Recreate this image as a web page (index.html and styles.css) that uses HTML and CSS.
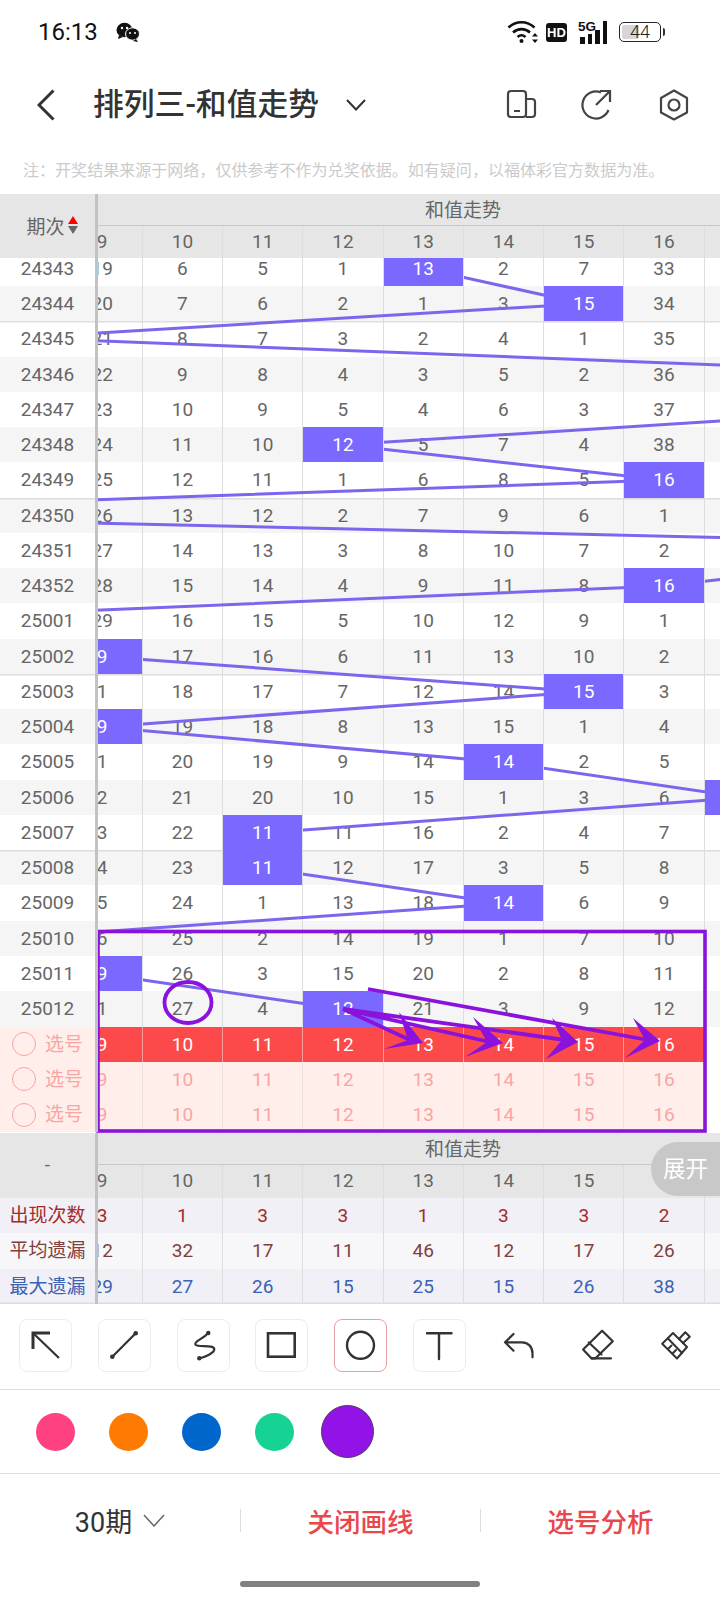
FILE: index.html
```html
<!DOCTYPE html>
<html lang="zh">
<head>
<meta charset="utf-8">
<title>排列三-和值走势</title>
<link rel="stylesheet" href="styles.css">
</head>
<body>
<div class="screen">
  <div class="status">
    <span class="time">16:13</span>
    <svg class="wechat" width="24" height="20" viewBox="0 0 24 20"><ellipse cx="8.5" cy="8" rx="8" ry="7.2" fill="#111"/><path d="M3 13l-1 4 5-2z" fill="#111"/><ellipse cx="16.5" cy="12" rx="7" ry="6.2" fill="#111" stroke="#fff" stroke-width="1"/><path d="M20 17l2 3-5-1z" fill="#111"/><circle cx="6" cy="6" r="1.2" fill="#fff"/><circle cx="11" cy="6" r="1.2" fill="#fff"/><circle cx="14" cy="11" r="1" fill="#fff"/><circle cx="19" cy="11" r="1" fill="#fff"/></svg>
    <span class="status-right">
      <svg width="32" height="24" viewBox="0 0 32 24" fill="none" stroke="#111" stroke-width="2.6"><path d="M1.5 7.5C9 .5 20 .5 27.5 7.5"/><path d="M6 12.5c5-4.5 12-4.5 17 0"/><path d="M10.5 17c2.500-2.200 5.500-2.200 8 0"/><circle cx="14.500" cy="21" r="2" fill="#111" stroke="none"/><path d="M28 13l-3 3.500h6zM28 23l-3-3.500h6z" fill="#111" stroke="none"/></svg>
      <span class="hd">HD</span>
      <span class="signal"><span class="five-g">5G</span><span class="bars"><i class="b1"></i><i class="b2"></i><i class="b3"></i><i class="b4"></i></span></span>
      <span class="battery"><span class="battery-fill"></span><span class="battery-num">44</span></span>
    </span>
  </div>

  <div class="header">
    <svg class="back" width="18" height="32" viewBox="0 0 18 32" fill="none" stroke="#333" stroke-width="3"><path d="M16.500 1.500L2 16l14.500 14.500"/></svg>
    <h1 class="title">排列三-和值走势</h1>
    <svg class="caret" width="20" height="12" viewBox="0 0 20 12" fill="none" stroke="#333" stroke-width="2"><path d="M1 1l9 9.500L19 1"/></svg>
    <span class="header-icons">
      <svg width="32" height="32" viewBox="0 0 32 32" fill="none" stroke="#444" stroke-width="2.200"><rect x="2" y="2" width="18" height="26" rx="3"/><path d="M20 10h6a3 3 0 0 1 3 3v12a3 3 0 0 1-3 3h-6M8 22h6"/></svg>
      <svg width="32" height="32" viewBox="0 0 32 32" fill="none" stroke="#444" stroke-width="2.200"><path d="M21 3.500A13.500 13.500 0 1 0 28.500 21"/><path d="M16 16L30 2M20 2h10v11"/></svg>
      <svg class="hex" width="32" height="32" viewBox="0 0 32 32" fill="none" stroke="#444" stroke-width="2.200" stroke-linejoin="round"><path d="M16 1.500l13 7.500v14.500l-13 7-13-7V9z"/><circle cx="16" cy="16" r="5.500"/></svg>
    </span>
  </div>

  <p class="note">注：开奖结果来源于网络，仅供参考不作为兑奖依据。如有疑问，以福体彩官方数据为准。</p>

  <div class="chart">
    <div class="head">
      <div class="head-label sortable"><span>期次</span><span class="sort"><i class="sort-up"></i><i class="sort-down"></i></span></div>
      <div class="head-main">
        <div class="head-title">和值走势</div>
        <div class="track head-nums"><span>9</span><span>10</span><span>11</span><span>12</span><span>13</span><span>14</span><span>15</span><span>16</span><span>17</span></div>
      </div>
    </div>

    <div class="body">
      <div class="row first"><b class="period">24343</b><div class="track"><span>19</span><span>6</span><span>5</span><span>1</span><span class="hit">13</span><span>2</span><span>7</span><span>33</span><span></span></div></div>
      <div class="row alt"><b class="period">24344</b><div class="track"><span>20</span><span>7</span><span>6</span><span>2</span><span>1</span><span>3</span><span class="hit">15</span><span>34</span><span></span></div></div>
      <div class="row brk"><b class="period">24345</b><div class="track"><span>21</span><span>8</span><span>7</span><span>3</span><span>2</span><span>4</span><span>1</span><span>35</span><span></span></div></div>
      <div class="row alt"><b class="period">24346</b><div class="track"><span>22</span><span>9</span><span>8</span><span>4</span><span>3</span><span>5</span><span>2</span><span>36</span><span></span></div></div>
      <div class="row"><b class="period">24347</b><div class="track"><span>23</span><span>10</span><span>9</span><span>5</span><span>4</span><span>6</span><span>3</span><span>37</span><span></span></div></div>
      <div class="row alt"><b class="period">24348</b><div class="track"><span>24</span><span>11</span><span>10</span><span class="hit">12</span><span>5</span><span>7</span><span>4</span><span>38</span><span></span></div></div>
      <div class="row"><b class="period">24349</b><div class="track"><span>25</span><span>12</span><span>11</span><span>1</span><span>6</span><span>8</span><span>5</span><span class="hit">16</span><span></span></div></div>
      <div class="row alt brk"><b class="period">24350</b><div class="track"><span>26</span><span>13</span><span>12</span><span>2</span><span>7</span><span>9</span><span>6</span><span>1</span><span></span></div></div>
      <div class="row"><b class="period">24351</b><div class="track"><span>27</span><span>14</span><span>13</span><span>3</span><span>8</span><span>10</span><span>7</span><span>2</span><span></span></div></div>
      <div class="row alt"><b class="period">24352</b><div class="track"><span>28</span><span>15</span><span>14</span><span>4</span><span>9</span><span>11</span><span>8</span><span class="hit">16</span><span></span></div></div>
      <div class="row"><b class="period">25001</b><div class="track"><span>29</span><span>16</span><span>15</span><span>5</span><span>10</span><span>12</span><span>9</span><span>1</span><span></span></div></div>
      <div class="row alt"><b class="period">25002</b><div class="track"><span class="hit">9</span><span>17</span><span>16</span><span>6</span><span>11</span><span>13</span><span>10</span><span>2</span><span></span></div></div>
      <div class="row brk"><b class="period">25003</b><div class="track"><span>1</span><span>18</span><span>17</span><span>7</span><span>12</span><span>14</span><span class="hit">15</span><span>3</span><span></span></div></div>
      <div class="row alt"><b class="period">25004</b><div class="track"><span class="hit">9</span><span>19</span><span>18</span><span>8</span><span>13</span><span>15</span><span>1</span><span>4</span><span></span></div></div>
      <div class="row"><b class="period">25005</b><div class="track"><span>1</span><span>20</span><span>19</span><span>9</span><span>14</span><span class="hit">14</span><span>2</span><span>5</span><span></span></div></div>
      <div class="row alt"><b class="period">25006</b><div class="track"><span>2</span><span>21</span><span>20</span><span>10</span><span>15</span><span>1</span><span>3</span><span>6</span><span class="hit">17</span></div></div>
      <div class="row"><b class="period">25007</b><div class="track"><span>3</span><span>22</span><span class="hit">11</span><span>11</span><span>16</span><span>2</span><span>4</span><span>7</span><span></span></div></div>
      <div class="row alt brk"><b class="period">25008</b><div class="track"><span>4</span><span>23</span><span class="hit">11</span><span>12</span><span>17</span><span>3</span><span>5</span><span>8</span><span></span></div></div>
      <div class="row"><b class="period">25009</b><div class="track"><span>5</span><span>24</span><span>1</span><span>13</span><span>18</span><span class="hit">14</span><span>6</span><span>9</span><span></span></div></div>
      <div class="row alt"><b class="period">25010</b><div class="track"><span>6</span><span>25</span><span>2</span><span>14</span><span>19</span><span>1</span><span>7</span><span>10</span><span></span></div></div>
      <div class="row"><b class="period">25011</b><div class="track"><span class="hit">9</span><span>26</span><span>3</span><span>15</span><span>20</span><span>2</span><span>8</span><span>11</span><span></span></div></div>
      <div class="row alt"><b class="period">25012</b><div class="track"><span>1</span><span>27</span><span>4</span><span class="hit">12</span><span>21</span><span>3</span><span>9</span><span>12</span><span></span></div></div>

      <div class="row pick on"><div class="period pick-label"><i class="ring"></i>选号</div><div class="track"><span>9</span><span>10</span><span>11</span><span>12</span><span>13</span><span>14</span><span>15</span><span>16</span><span></span></div></div>
      <div class="row pick"><div class="period pick-label"><i class="ring"></i>选号</div><div class="track"><span>9</span><span>10</span><span>11</span><span>12</span><span>13</span><span>14</span><span>15</span><span>16</span><span></span></div></div>
      <div class="row pick"><div class="period pick-label"><i class="ring"></i>选号</div><div class="track"><span>9</span><span>10</span><span>11</span><span>12</span><span>13</span><span>14</span><span>15</span><span>16</span><span></span></div></div>

      <svg class="trend" width="720" height="875" viewBox="0 258 720 875" fill="none" stroke="#7b66ee" stroke-width="3">
        <path d="M423 268.400L583 303.700L90 333.500"/>
        <path d="M90 340.500L720 365"/>
        <path d="M720 421L343 444.800L664 480.100L90 500"/>
        <path d="M90 523L720 537.500"/>
        <path d="M720 579.600L664 585.900L90 610.500"/>
        <path d="M102 656.500L583 691.800L102 727L503 762.300L744 797.600L263 832.900"/>
        <path d="M263 868.200L503 903.400L90 932.500"/>
        <path d="M102 974L343 1009.300"/>
      </svg>
      <svg class="marks" width="720" height="875" viewBox="0 258 720 875" fill="none" stroke="#8a12dc" stroke-width="3.800">
        <rect x="98" y="931.500" width="607" height="199.500" stroke-width="3.600"/>
        <ellipse cx="188" cy="1002.500" rx="23.500" ry="20.500"/>
        <path d="M368 989L648 1040M343 1009L565 1040M343 1009L490 1042M343 1009L410 1040"/>
        <path fill="#8a12dc" stroke="none" d="M660 1041L633 1018L645 1040L625 1058z"/>
        <path fill="#8a12dc" stroke="none" d="M578 1042L552 1018L562 1040L546 1059z"/>
        <path fill="#8a12dc" stroke="none" d="M503 1043L473 1017L487 1042L465 1057z"/>
        <path fill="#8a12dc" stroke="none" d="M423 1043L399 1012L408 1040L384 1049z"/>
      </svg>
    </div>

    <div class="head foot-head">
      <div class="head-label">-</div>
      <div class="head-main">
        <div class="head-title">和值走势</div>
        <div class="track head-nums"><span>9</span><span>10</span><span>11</span><span>12</span><span>13</span><span>14</span><span>15</span><span>16</span><span>17</span></div>
      </div>
      <button class="expand">展开</button>
    </div>
    <div class="row stat times"><b class="period">出现次数</b><div class="track"><span>3</span><span>1</span><span>3</span><span>3</span><span>1</span><span>3</span><span>3</span><span>2</span><span></span></div></div>
    <div class="row stat avg"><b class="period">平均遗漏</b><div class="track"><span>12</span><span>32</span><span>17</span><span>11</span><span>46</span><span>12</span><span>17</span><span>26</span><span></span></div></div>
    <div class="row stat max"><b class="period">最大遗漏</b><div class="track"><span>29</span><span>27</span><span>26</span><span>15</span><span>25</span><span>15</span><span>26</span><span>38</span><span></span></div></div>
  </div>

  <div class="tools">
    <span class="tool framed"><svg width="53" height="53" viewBox="0 0 53 53" fill="none" stroke="#333" stroke-width="2.200"><path d="M14.500 14.500L40 39" /><path d="M14 30V14h17" stroke-width="3"/></svg></span>
    <span class="tool framed"><svg width="53" height="53" viewBox="0 0 53 53" fill="none" stroke="#333" stroke-width="2.200"><path d="M14.300 37.700L37.700 14.300"/><circle cx="14.300" cy="37.700" r="2.300" fill="#333" stroke="none"/><circle cx="37.700" cy="14.300" r="2.300" fill="#333" stroke="none"/></svg></span>
    <span class="tool framed"><svg width="53" height="53" viewBox="0 0 53 53" fill="none" stroke="#333" stroke-width="2.200"><path d="M31.300 14C26 20 18 22 18.300 25C18.500 29 37 25 37.300 30C37.500 34 28 38 22.300 39.300"/><circle cx="31.300" cy="14" r="2.200" fill="#333" stroke="none"/><circle cx="22.300" cy="39.300" r="2.200" fill="#333" stroke="none"/></svg></span>
    <span class="tool framed"><svg width="53" height="53" viewBox="0 0 53 53" fill="none" stroke="#333" stroke-width="2.600"><rect x="13" y="14.300" width="26.700" height="23.400"/></svg></span>
    <span class="tool framed active"><svg width="53" height="53" viewBox="0 0 53 53" fill="none" stroke="#333" stroke-width="2.400"><circle cx="26.500" cy="26.300" r="13.500"/></svg></span>
    <span class="tool framed"><svg width="53" height="53" viewBox="0 0 53 53" fill="none" stroke="#333" stroke-width="2.400" stroke-linecap="round"><path d="M14 14.300H38.500M26 14.300V40"/></svg></span>
    <span class="tool"><svg width="53" height="53" viewBox="0 0 53 53" fill="none" stroke="#333" stroke-width="2.200" stroke-linecap="round" stroke-linejoin="round"><path d="M21.500 15L13 23.300l8.500 8.400M13 23.300H30c6 0 10.500 4.500 10.500 11v4"/></svg></span>
    <span class="tool"><svg width="53" height="53" viewBox="0 0 53 53" fill="none" stroke="#333" stroke-width="2.200" stroke-linecap="round" stroke-linejoin="round"><path d="M31.100 11.700L41.800 22.300L24.500 39.300H20.400L12.100 30.500z"/><path d="M17.800 23.500L30.500 35.500M20.400 39.300H40"/></svg></span>
    <span class="tool"><svg width="53" height="53" viewBox="0 0 53 53" fill="none" stroke="#333" stroke-width="2" stroke-linecap="round" stroke-linejoin="round"><path d="M30 20L36.300 13.300L40.800 17.700L34 24"/><path d="M24 14L38 28L28 39.500L13.200 24.700z"/><path d="M19 19.500L33 34M19 30L22.500 26.500M23.500 34.500L27 31"/></svg></span>
  </div>

  <div class="colors">
    <span class="swatch-slot"><i class="swatch pink"></i></span>
    <span class="swatch-slot"><i class="swatch orange"></i></span>
    <span class="swatch-slot"><i class="swatch blue"></i></span>
    <span class="swatch-slot"><i class="swatch green"></i></span>
    <span class="swatch-slot"><i class="swatch purple"></i></span>
  </div>

  <div class="actions">
    <span class="action range">30期<svg width="22" height="13" viewBox="0 0 22 13" fill="none" stroke="#666" stroke-width="1.500"><path d="M1 1l10 11L21 1"/></svg></span>
    <span class="action danger">关闭画线</span>
    <span class="action danger">选号分析</span>
  </div>
  <div class="home-wrap"><span class="home"></span></div>
</div>
</body>
</html>
```
FILE: styles.css
```css
* { box-sizing: border-box; }
html, body { margin: 0; padding: 0; background: #fff; }
body { font-family: Roboto, "Noto Sans CJK SC", sans-serif; color: #666; }
i { display: block; font-style: normal; }
b { font-weight: 400; }

.screen { width: 720px; height: 1600px; display: flex; flex-direction: column; overflow: hidden; }

/* status bar */
.status { height: 64px; display: flex; align-items: center; padding: 0 59px 0 38px; flex: none; }
.time { font-size: 24px; color: #111; width: 78px; }
.status-right { margin-left: auto; display: flex; align-items: center; }
.hd { width: 21px; height: 19px; margin-left: 7px; background: #111; color: #fff; border-radius: 3px; font: 700 13px/19px "Liberation Sans", sans-serif; text-align: center; }
.signal { display: flex; flex-direction: column; width: 31px; height: 23px; margin-left: 11px; position: relative; }
.five-g { font: 700 13.500px/12px "Liberation Sans", sans-serif; color: #111; }
.bars { position: absolute; left: 2px; bottom: 0; display: flex; align-items: flex-end; gap: 3px; }
.bars i { width: 4.500px; background: #111; }
.b1 { height: 7px; } .b2 { height: 10px; } .b3 { height: 14px; } .b4 { height: 23px; }
.battery { width: 42px; height: 20px; margin-left: 10px; border: 1.500px solid #222; border-radius: 5px; position: relative; display: flex; align-items: center; justify-content: center; }
.battery::after { content: ""; position: absolute; right: -5px; top: 5px; width: 2.500px; height: 8px; background: #333; border-radius: 0 2px 2px 0; }
.battery-fill { position: absolute; left: 2px; top: 2px; bottom: 2px; width: 17px; background: #d6d6d6; border-radius: 2px; }
.battery-num { position: relative; font-size: 18px; line-height: 18px; font-weight: 300; color: #222; }

/* title bar */
.header { height: 82px; display: flex; align-items: center; padding-left: 37px; flex: none; }
.back { margin-right: 38px; }
.title { margin: 0 27px 0 0; font-size: 30.800px; line-height: 40px; font-weight: 500; color: #333; white-space: nowrap; }
.header-icons { margin-left: auto; display: flex; gap: 42px; padding-right: 30.500px; }
.hex { margin-left: 3.500px; }

.note { margin: 0; height: 48px; padding-left: 23px; font-size: 16.050px; line-height: 50px; color: #cbcbcb; white-space: nowrap; flex: none; }

/* chart */
.chart { flex: none; font-size: 19px; }
.head { display: flex; height: 64px; background: #e6e6e6; position: relative; }
.head-label { width: 98px; border-right: 3px solid #c2c2c2; display: flex; align-items: center; justify-content: center; gap: 3px; padding-bottom: 2px; }
.sortable { padding-left: 9px; }
.sort i { width: 0; height: 0; border-left: 5px solid transparent; border-right: 5px solid transparent; }
.sort-up { border-bottom: 8px solid #f00; margin-bottom: 2px; }
.sort-down { border-top: 8px solid #666; }
.head-main { flex: 1; min-width: 0; display: flex; flex-direction: column; }
.head-title { height: 32px; line-height: 34px; padding-left: 108px; text-align: center; border-bottom: 1.500px solid #c8c8c8; }
.head-nums { height: 32px; line-height: 31px; }
.head-nums span { border-right-color: #c4c4c4; }

.track { flex: 1; min-width: 0; display: flex; overflow: hidden; }
.track > span { flex: 0 0 80.280px; text-align: center; border-right: 1.500px solid #ddd; }
.track > :first-child { margin-left: -35.500px; }

.body { height: 875px; overflow: hidden; position: relative; }
.row { display: flex; height: 35.280px; line-height: 35.280px; background: #fff; }
.first { margin-top: -7.300px; }
.alt { background: #f5f5f5; }
.brk { box-shadow: inset 0 1.500px 0 #ddd; }
.period { width: 98px; flex: none; text-align: center; border-right: 3px solid #c2c2c2; background: inherit; box-shadow: inherit; position: relative; z-index: 4; }
.hit { background: #7b68ff; background-clip: padding-box; color: #fff; position: relative; z-index: 2; }
.trend, .marks { position: absolute; left: 0; top: 0; pointer-events: none; }
.trend { z-index: 1; }
.marks { z-index: 3; }

.pick { background: #ffeee9; color: #f9a5a5; }
.pick .track > span { border-right-color: #eee0dc; }
.pick.on .track > span { background: #fc4a4a; color: #fff; border-right-color: #fb9c9c; }
.pick .track > span:last-child { background: #fff; }
.pick-label { display: flex; align-items: center; justify-content: flex-start; padding-left: 12px; gap: 9px; background: #ffeee9; color: #f9a5a5; }
.ring { width: 24px; height: 24px; border: 1.500px solid #f9a5a5; border-radius: 50%; }

.foot-head { height: 64.500px; }
.expand { position: absolute; right: 0; top: 9px; width: 69px; height: 54px; padding: 0; border: 0; border-radius: 27px 0 0 27px; background: #c8c8c8; color: #fff; font: 22.500px/54px Roboto, "Noto Sans CJK SC", sans-serif; z-index: 2; }
.stat { background: #f0f0f6; height: 35.500px; line-height: 35.500px; }
.avg { background: #f7f6f8; color: #7f3f3f; }
.times { color: #a52a2a; }
.max { color: #3b62b5; box-shadow: inset 0 -1.500px 0 #ddd; }
.stat .period { font-size: 19px; }

/* tools */
.tools { height: 86px; padding: 15px 19px 0; display: flex; gap: 25.800px; border-bottom: 1.500px solid #ddd; flex: none; }
.tool { width: 53px; height: 53px; border: 1px solid transparent; border-radius: 8px; flex: none; }
.tool svg { display: block; margin: -1px; }
.framed { border-color: #ececec; }
.active { border-color: #e8a0a0; }

.colors { height: 84px; display: flex; align-items: center; padding-left: 18.500px; border-bottom: 1.500px solid #ddd; flex: none; }
.swatch-slot { width: 73px; display: flex; justify-content: center; }
.swatch { width: 39px; height: 38px; border-radius: 50%; }
.pink { background: #ff4081; }
.orange { background: #ff7a00; }
.blue { background: #0066cc; }
.green { background: #16d294; }
.purple { width: 53px; height: 53px; background: #9212e8; border: 1px solid #4a3a5a; }

.actions { height: 92px; display: flex; align-items: center; flex: none; }
.action { width: 240px; height: 23px; display: flex; align-items: center; justify-content: center; font-size: 26.500px; border-left: 1px solid #ddd; white-space: nowrap; }
.action:first-child { border-left: 0; }
.range { color: #333; gap: 11px; font-size: 27px; }
.danger { color: #e8474c; font-weight: 500; }
.home-wrap { height: 35px; display: flex; justify-content: center; padding-top: 15px; }
.home { width: 240px; height: 6px; background: #808080; border-radius: 3px; }
```
